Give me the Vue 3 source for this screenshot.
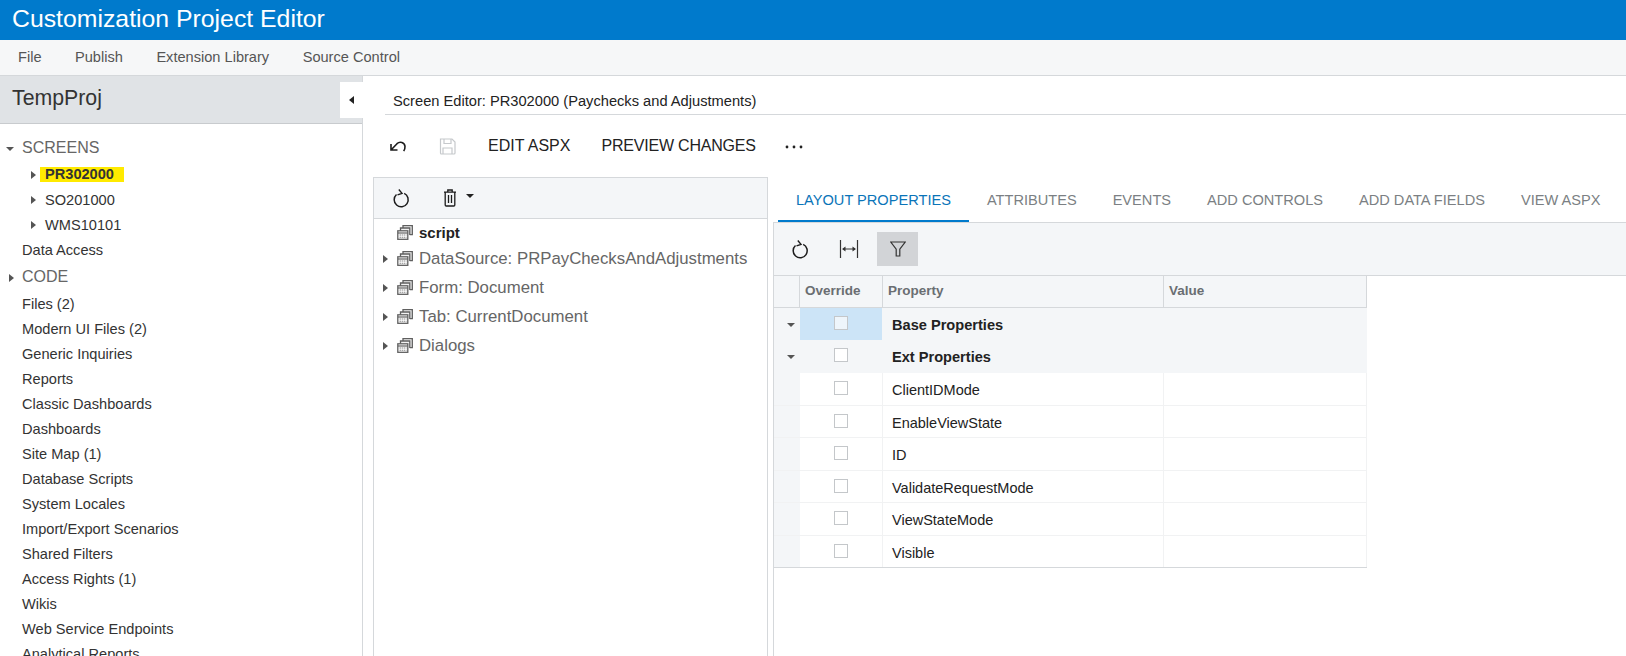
<script setup>
const menuItems = ['File', 'Publish', 'Extension Library', 'Source Control'];
const screens = [
  { name: 'PR302000', active: true },
  { name: 'SO201000' },
  { name: 'WMS10101' },
];
const codeItems = [
  'Files (2)',
  'Modern UI Files (2)',
  'Generic Inquiries',
  'Reports',
  'Classic Dashboards',
  'Dashboards',
  'Site Map (1)',
  'Database Scripts',
  'System Locales',
  'Import/Export Scenarios',
  'Shared Filters',
  'Access Rights (1)',
  'Wikis',
  'Web Service Endpoints',
  'Analytical Reports',
];
const treeItems = ['DataSource: PRPayChecksAndAdjustments', 'Form: Document', 'Tab: CurrentDocument', 'Dialogs'];
const tabs = ['LAYOUT PROPERTIES', 'ATTRIBUTES', 'EVENTS', 'ADD CONTROLS', 'ADD DATA FIELDS', 'VIEW ASPX'];
const groupRows = ['Base Properties', 'Ext Properties'];
const propRows = ['ClientIDMode', 'EnableViewState', 'ID', 'ValidateRequestMode', 'ViewStateMode', 'Visible'];
</script>

<template>
  <div class="page">
    <svg class="defs" width="0" height="0">
      <defs>
        <symbol id="stack" viewBox="0 0 16 15">
          <path d="M6 3V.7h9.300v9h-2.500" fill="#f2f2f2" stroke="#5f5f5f" stroke-width="1.300" />
          <path d="M3.500 6V3h9.300v7" fill="#f2f2f2" stroke="#5f5f5f" stroke-width="1.300" />
          <rect x=".8" y="5.800" width="10" height="8.500" fill="#fff" stroke="#5f5f5f" stroke-width="1.300" />
          <path d="M1 8h9.600" stroke="#5f5f5f" stroke-width="1.200" />
          <path d="M2.500 10h7M2.500 12.200h7" stroke="#8a8a8a" stroke-width="1.100" stroke-dasharray="1.500 .6" />
        </symbol>
        <symbol id="refresh" viewBox="0 0 18 20">
          <path d="M12.200 5.400a7 7 0 1 1-7.700 1.100" fill="none" stroke="#1c1c1c" stroke-width="1.500" />
          <path d="M6.800 1.500L10 5.300 5.500 6.800" fill="none" stroke="#1c1c1c" stroke-width="1.400" />
        </symbol>
      </defs>
    </svg>

    <header class="topbar">Customization Project Editor</header>

    <nav class="menubar">
      <span v-for="item in menuItems" :key="item" class="menu-item">{{ item }}</span>
    </nav>

    <div class="body">
      <aside class="sidebar">
        <div class="project-head">
          TempProj
          <button class="collapse-btn"><span class="arrow-left"></span></button>
        </div>
        <div class="nav-tree">
          <div class="nav-section screens-section">
            <span class="caret-down"></span>
            SCREENS
          </div>
          <div v-for="s in screens" :key="s.name" class="screen-row">
            <span class="caret-right"></span>
            <span :class="{ 'screen-active': s.active }">{{ s.name }}</span>
          </div>
          <div class="nav-row data-access">Data Access</div>
          <div class="nav-section code-section">
            <span class="caret-right"></span>
            CODE
          </div>
          <div v-for="item in codeItems" :key="item" class="nav-row">{{ item }}</div>
        </div>
      </aside>

      <main class="main">
        <div class="screen-title">Screen Editor: PR302000 (Paychecks and Adjustments)</div>

        <div class="main-toolbar">
          <svg class="undo-icon" width="18" height="16" viewBox="0 0 18 16">
            <path d="M2 6v6h6.500M2 12l6-6.300c2.800-2.700 7.700-1.300 8 2.700.1 1.800-.4 3.300-1.300 4.800" fill="none" stroke="#1c1c1c" stroke-width="1.600" />
          </svg>
          <svg class="save-icon" width="17" height="17" viewBox="0 0 17 17">
            <path d="M1.500 1h11.500l3 3v11a1 1 0 0 1-1 1H2.500a1 1 0 0 1-1-1z" fill="none" stroke="#c6c9cc" stroke-width="1.200" />
            <path d="M5 1v4.500h7V1M4 16v-6h9v6" fill="none" stroke="#c6c9cc" stroke-width="1.200" />
          </svg>
          <span class="tool-text edit-aspx">EDIT ASPX</span>
          <span class="tool-text preview">PREVIEW CHANGES</span>
          <span class="dots"><i></i><i></i><i></i></span>
        </div>

        <div class="panes">
          <section class="tree-pane">
            <div class="tree-toolbar">
              <svg class="refresh" width="18" height="20"><use href="#refresh" /></svg>
              <svg class="trash" width="14" height="18" viewBox="0 0 14 18">
                <path d="M1 3.200h12M4.800 3.200V1h4.400v2.200M2.200 3.200V16a1 1 0 0 0 1 1h7.600a1 1 0 0 0 1-1V3.200M5.500 6v8M8.500 6v8" fill="none" stroke="#1c1c1c" stroke-width="1.300" />
              </svg>
              <span class="caret-down dark"></span>
            </div>
            <div class="tree-row script-row">
              <svg class="stack" width="16" height="15"><use href="#stack" /></svg>
              <b>script</b>
            </div>
            <div v-for="t in treeItems" :key="t" class="tree-row">
              <span class="caret-right tree-caret"></span>
              <svg class="stack" width="16" height="15"><use href="#stack" /></svg>
              <span>{{ t }}</span>
            </div>
          </section>

          <section class="props-pane">
            <div class="tabs">
              <span v-for="(t, i) in tabs" :key="t" class="tab" :class="{ 'tab-active': i === 0 }">{{ t }}</span>
            </div>
            <div class="props-body">
              <div class="props-toolbar">
                <span class="tool-btn">
                  <svg width="18" height="20"><use href="#refresh" /></svg>
                </span>
                <span class="tool-btn">
                  <svg width="20" height="18" viewBox="0 0 20 18">
                    <path d="M1.500 0v18M18.500 0v18" stroke="#333" stroke-width="1.200" />
                    <path d="M4 9h12" stroke="#333" stroke-width="1" />
                    <path d="M3 9l3.500-2.500v5zM17 9l-3.500-2.500v5z" fill="#333" />
                  </svg>
                </span>
                <span class="tool-btn tool-btn-on">
                  <svg width="16" height="16" viewBox="0 0 16 16">
                    <path d="M.8 1h14.400L9.800 8.200V15H6.200V8.200z" fill="none" stroke="#333" stroke-width="1.200" />
                  </svg>
                </span>
              </div>
              <div class="grid">
                <div class="grid-row grid-head">
                  <div class="cell gutter"></div>
                  <div class="cell override">Override</div>
                  <div class="cell prop">Property</div>
                  <div class="cell value">Value</div>
                </div>
                <div v-for="(g, i) in groupRows" :key="g" class="grid-row group-row">
                  <div class="cell gutter"><span class="caret-down"></span></div>
                  <div class="cell override check-cell" :class="{ selected: i === 0 }"><span class="check"></span></div>
                  <div class="cell prop"><b class="group-label">{{ g }}</b></div>
                  <div class="cell value"></div>
                </div>
                <div v-for="p in propRows" :key="p" class="grid-row prop-row">
                  <div class="cell gutter"></div>
                  <div class="cell override check-cell"><span class="check"></span></div>
                  <div class="cell prop"><span class="prop-label">{{ p }}</span></div>
                  <div class="cell value"></div>
                </div>
              </div>
            </div>
          </section>
        </div>
      </main>
    </div>
  </div>
</template>

<style>
html, body {
  margin: 0;
  overflow: hidden;
  background: #fff;
}
</style>

<style scoped>
.page {
  height: 656px;
  width: 1626px;
  display: flex;
  flex-direction: column;
  overflow: hidden;
  font-family: "Liberation Sans", Arial, sans-serif;
  color: #222;
  background: #fff;
}
.defs {
  position: absolute;
}
.topbar {
  height: 40px;
  flex: none;
  background: #007acc;
  color: #fff;
  font-size: 24.800px;
  line-height: 38px;
  padding-left: 12px;
}
.menubar {
  height: 36px;
  flex: none;
  box-sizing: border-box;
  background: #f6f7f8;
  border-bottom: 1px solid #d5d8db;
  display: flex;
  align-items: center;
  gap: 33.500px;
  padding: 0 0 1px 18px;
  font-size: 14.600px;
  color: #555;
}
.body {
  flex: 1;
  display: flex;
  min-height: 0;
}
.sidebar {
  width: 363px;
  flex: none;
  box-sizing: border-box;
  border-right: 1px solid #d5d8db;
}
.project-head {
  position: relative;
  height: 48px;
  box-sizing: border-box;
  background: #e0e3e6;
  border-bottom: 1px solid #c8cbce;
  font-size: 21.300px;
  line-height: 44px;
  padding-left: 12px;
  color: #333;
}
.collapse-btn {
  position: absolute;
  right: -1px;
  top: 6px;
  width: 23px;
  height: 36px;
  border: 0;
  background: #fff;
  padding: 0;
  display: flex;
  align-items: center;
  justify-content: center;
}
.arrow-left {
  border-style: solid;
  border-width: 4px 5px 4px 0;
  border-color: transparent #222 transparent transparent;
}
.nav-tree {
  padding-top: 10px;
  font-size: 14.600px;
  color: #333;
}
.nav-section {
  position: relative;
  height: 27px;
  line-height: 27px;
  padding-left: 22px;
  font-size: 16px;
  color: #666;
}
.screens-section {
  height: 28px;
}
.nav-section .caret-down {
  position: absolute;
  left: 6px;
  top: 13px;
}
.nav-section .caret-right {
  position: absolute;
  left: 9px;
  top: 11px;
}
.code-section {
  height: 25px;
  margin-bottom: 4px;
}
.screen-row {
  display: flex;
  align-items: center;
  height: 25px;
  padding-left: 31px;
  gap: 9px;
}
.screen-active {
  background: #ffea00;
  font-weight: 700;
  padding: 0 10px 0 5px;
  margin-left: -5px;
  line-height: 15px;
}
.nav-row {
  height: 25px;
  line-height: 25px;
  padding-left: 22px;
  white-space: nowrap;
}
.data-access {
  margin-top: 1px;
}
.caret-down {
  display: inline-block;
  width: 0;
  height: 0;
  border-style: solid;
  border-width: 4px 4px 0;
  border-color: #555 transparent transparent;
}
.caret-down.dark {
  border-color: #222 transparent transparent;
  border-width: 4px 4px 0;
}
.caret-right {
  display: inline-block;
  width: 0;
  height: 0;
  border-style: solid;
  border-width: 4px 0 4px 5px;
  border-color: transparent transparent transparent #555;
}
.main {
  flex: 1;
  min-width: 0;
  display: flex;
  flex-direction: column;
}
.screen-title {
  height: 39px;
  flex: none;
  box-sizing: border-box;
  margin-left: 22px;
  padding-left: 8px;
  padding-top: 16px;
  border-bottom: 1px solid #d5d8db;
  font-size: 14.670px;
  line-height: 18px;
  color: #222;
}
.main-toolbar {
  height: 62px;
  flex: none;
  display: flex;
  align-items: center;
  padding-left: 26px;
  font-size: 16px;
  color: #222;
}
.save-icon {
  margin-left: 32px;
}
.edit-aspx {
  margin-left: 32px;
}
.preview {
  margin-left: 31px;
  letter-spacing: -.2px;
}
.dots {
  display: flex;
  gap: 5px;
  margin-left: 30px;
  margin-top: 2px;
}
.dots i {
  width: 2px;
  height: 2px;
  background: #222;
  border-radius: 50%;
  display: block;
  box-shadow: 0 0 0 .4px #222;
}
.panes {
  flex: 1;
  display: flex;
  min-height: 0;
  padding-left: 10px;
}
.tree-pane {
  width: 395px;
  flex: none;
  box-sizing: border-box;
  border: 1px solid #d5d8db;
  border-bottom: 0;
}
.tree-toolbar {
  height: 40px;
  background: #f4f6f8;
  border-bottom: 1px solid #d5d8db;
  display: flex;
  align-items: center;
  padding-left: 18px;
}
.trash {
  margin-left: 33px;
}
.tree-toolbar .caret-down {
  margin: -4px 0 0 9px;
}
.tree-row {
  position: relative;
  height: 29px;
  display: flex;
  align-items: center;
  padding-left: 23px;
  font-size: 16.800px;
  color: #666;
  gap: 6px;
}
.tree-row .stack {
  flex: none;
}
.script-row {
  height: 26px;
  margin-bottom: -1px;
  font-size: 15px;
  color: #222;
}
.tree-caret {
  position: absolute;
  left: 9px;
  top: 11px;
}
.props-pane {
  flex: 1;
  min-width: 0;
  display: flex;
  flex-direction: column;
  margin-left: 5px;
}
.tabs {
  height: 46px;
  flex: none;
  box-sizing: border-box;
  display: flex;
  padding-left: 5px;
}
.tab {
  padding: 15px 18px 0;
  font-size: 14.600px;
  color: #7b7f83;
  white-space: nowrap;
  box-sizing: border-box;
  height: 46px;
}
.tab-active {
  color: #0a74b8;
  border-bottom: 3px solid #007acc;
}
.props-body {
  flex: 1;
  border: 1px solid #d5d8db;
  border-bottom: 0;
  border-right: 0;
  margin-top: -1px;
  min-height: 0;
}
.props-toolbar {
  height: 53px;
  box-sizing: border-box;
  background: #f4f6f8;
  border-bottom: 1px solid #d5d8db;
  display: flex;
  align-items: center;
  gap: 8px;
  padding-left: 5px;
}
.tool-btn {
  width: 41px;
  height: 34px;
  display: flex;
  align-items: center;
  justify-content: center;
}
.tool-btn-on {
  background: #d2d4d7;
}
.grid {
  width: 593px;
}
.grid-row {
  display: flex;
  height: 32.500px;
}
.grid-head {
  height: 32px;
  background: #f4f6f8;
  border-bottom: 1px solid #d5d8db;
  color: #6a6e72;
  font-size: 13.500px;
  font-weight: 700;
  box-sizing: border-box;
}
.grid-head .cell {
  border-right: 1px solid #d5d8db;
  padding-left: 5px;
  line-height: 30px;
}
.cell {
  box-sizing: border-box;
  flex: none;
}
.gutter {
  width: 26px;
  background: #f4f6f8;
  position: relative;
}
.gutter .caret-down {
  position: absolute;
  left: 13px;
  top: 15px;
}
.override {
  width: 83px;
}
.prop {
  width: 281px;
}
.value {
  width: 203px;
}
.group-row {
  background: #f4f6f8;
  font-size: 14.600px;
  height: 32px;
}
.group-row + .group-row {
  height: 33px;
}
.group-row .override, .group-row .prop, .group-row .value {
  border-right: 1px solid #f4f6f8;
}
.prop-row {
  font-size: 14.500px;
  border-bottom: 1px solid #f1f2f3;
  box-sizing: border-box;
}
.prop-row .override, .prop-row .prop, .prop-row .value {
  border-right: 1px solid #f1f2f3;
}
.prop-row:last-child {
  border-bottom: 1px solid #d5d8db;
}
.check-cell {
  display: flex;
  justify-content: center;
  padding-top: 8px;
}
.selected {
  background: #cce4f7;
}
.check {
  width: 14px;
  height: 14px;
  box-sizing: border-box;
  border: 1px solid #c4c7ca;
  background: #fff;
  display: block;
}
.selected .check {
  background: #eef5fb;
}
.group-label, .prop-label {
  display: block;
  padding-left: 9px;
  line-height: 34px;
  color: #222;
}
</style>
